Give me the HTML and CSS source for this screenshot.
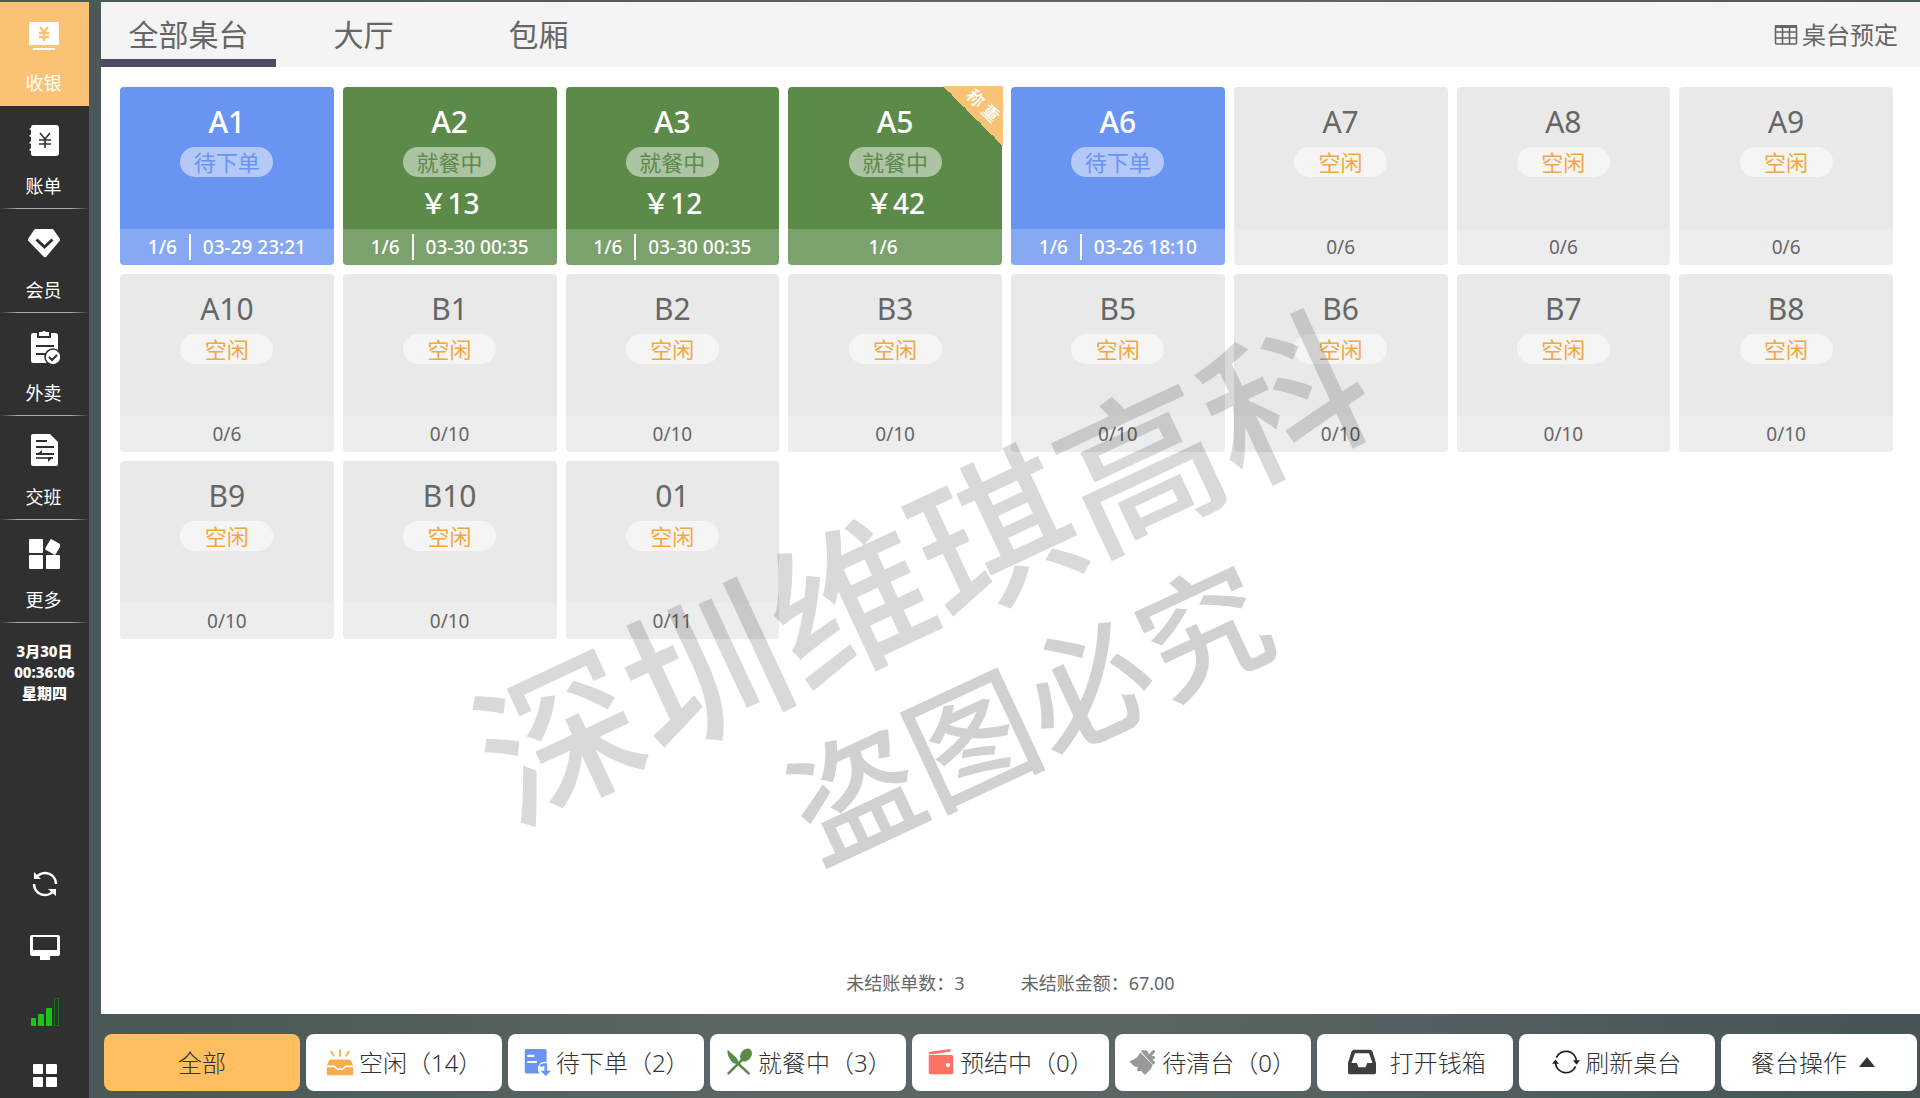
FILE: index.html
```html
<!DOCTYPE html>
<html lang="zh-CN">
<head>
<meta charset="utf-8">
<title>桌台</title>
<link rel="stylesheet" href="styles.css">
</head>
<body>
<div class="app">
  <aside class="sidebar">
    <nav class="nav">
      <a class="nav-item active" href="#cashier">
        <svg class="nav-icon" viewBox="0 0 32 32"><path fill="#fff" d="M2 2h28a1 1 0 0 1 1 1v21a1 1 0 0 1-1 1H2a1 1 0 0 1-1-1V3a1 1 0 0 1 1-1zM5 28h22v2H5z"/><path fill="none" stroke="#f9c275" stroke-width="2.4" d="M12 7l4 5 4-5M11 13h10M11 17h10M16 12v9"/></svg>
        <span>收银</span></a>
      <a class="nav-item" href="#bills">
        <svg class="nav-icon" viewBox="0 0 32 32"><path fill="#fff" d="M5 1h23q3 0 3 3v25q0 3-3 3H5q-2 0-2-3v-2l-2-1 2-2v-4l-2-1 2-2v-4l-2-1 2-2V6L1 5l2-1q0-3 2-3z"/><path fill="none" stroke="#303030" stroke-width="1.6" d="M12 9l5 6 5-6M11 16h12M11 20h12M17 15v9"/></svg>
        <span>账单</span></a>
      <a class="nav-item" href="#members">
        <svg class="nav-icon" viewBox="0 0 32 32"><path fill="#fff" d="M8 2h17l7 10q.5 1-.5 2L18.500 29.500q-1.500 1.500-3 0L.5 14q-1-1-.5-2L6 3q.7-1 2-1z"/><path fill="none" stroke="#303030" stroke-width="3" d="M8.500 12.500l8 7.500 8-7.500"/></svg>
        <span>会员</span></a>
      <a class="nav-item" href="#takeout">
        <svg class="nav-icon tall" viewBox="0 0 32 36"><path fill="#fff" d="M5 4h4v5h14V4h4q3 0 3 3v26q0 1-1 1H5q-2 0-2-2V6q0-2 2-2zM11 3h3a2.500 2.500 0 0 1 4 0h3v4H11z"/><path fill="none" stroke="#303030" stroke-width="2.200" d="M8 17h18M8 25h9"/><circle cx="25" cy="28" r="8" fill="#fff" stroke="#303030" stroke-width="1.600"/><path fill="none" stroke="#303030" stroke-width="2" d="M21 28l3 3 5-5"/></svg>
        <span>外卖</span></a>
      <a class="nav-item" href="#shift">
        <svg class="nav-icon tall" viewBox="0 0 32 36"><path fill="#fff" d="M5 2h17l8 8v22q0 2-2 2H5q-2 0-2-2V4q0-2 2-2z"/><path fill="none" stroke="#303030" stroke-width="2" d="M8 9h11M8 15h18M8 22h18"/><path fill="none" stroke="#303030" stroke-width="1.600" d="M8 26h17"/><path fill="#303030" d="M8 23l6-5v5zM25 25l-5 5v-5z"/></svg>
        <span>交班</span></a>
      <a class="nav-item" href="#more">
        <svg class="nav-icon" viewBox="0 0 32 32"><g fill="#fff"><rect x="1" y="1" width="14" height="14" rx="1"/><rect x="1" y="17" width="14" height="14" rx="1"/><rect x="18" y="17" width="14" height="14" rx="1"/><rect x="19" y="3" width="12" height="12" rx="1" transform="rotate(30 25 9)"/></g></svg>
        <span>更多</span></a>
    </nav>
    <div class="clock"><span>3月30日</span><span>00:36:06</span><span>星期四</span></div>
    <div class="tools">
      <button class="tool" aria-label="刷新"><svg viewBox="0 0 32 32"><g fill="none" stroke="#fff" stroke-width="2.600"><path d="M7.500 9A11 11 0 0 1 27 16M24.500 23A11 11 0 0 1 5 16"/></g><path fill="#fff" d="M5 4v7h7zM27 28v-7h-8z"/></svg></button>
      <button class="tool" aria-label="副屏"><svg viewBox="0 0 32 32"><path fill="#fff" fill-rule="evenodd" d="M3 3h26q2 0 2 2v17q0 2-2 2h-8v4H11v-4H3q-2 0-2-2V5q0-2 2-2zM4 5v13h24V5z"/></svg></button>
      <button class="tool" aria-label="信号"><svg viewBox="0 0 32 32"><g fill="#1bc41b"><rect x="2" y="22" width="5" height="8" rx="1"/><rect x="9" y="18" width="6" height="12" rx="1"/><rect x="17" y="12" width="6" height="18" rx="1"/></g><rect x="25.500" y="2.500" width="4" height="27" fill="none" stroke="#1a741f"/></svg></button>
      <button class="tool" aria-label="应用"><svg viewBox="0 0 32 32"><g fill="#fff"><rect x="4" y="4" width="10" height="10" rx="1"/><rect x="17" y="4" width="11" height="10" rx="1"/><rect x="4" y="17" width="10" height="10" rx="1"/><rect x="17" y="17" width="11" height="10" rx="1"/></g></svg></button>
    </div>
  </aside>

  <div class="content">
    <main class="panel">
      <header class="topbar">
        <button class="tab active">全部桌台</button>
        <button class="tab">大厅</button>
        <button class="tab">包厢</button>
        <a class="reserve" href="#reserve"><svg class="grid-icon" viewBox="0 0 24 24"><g fill="none" stroke="#666" stroke-width="1.600"><rect x="1.500" y="3" width="21" height="18" rx="1"/><path d="M1 9h22M1 15h22M8.500 4v17M15.500 4v17"/></g><path fill="#666" d="M1 2h22v3H1z"/></svg>桌台预定</a>
      </header>

      <section class="tables">
        <button class="card waiting"><span class="name">A1</span><span class="pill">待下单</span><span class="foot"><span>1/6</span><span class="time">03-29 23:21</span></span></button>
        <button class="card dining"><span class="name">A2</span><span class="pill">就餐中</span><span class="price">￥13</span><span class="foot"><span>1/6</span><span class="time">03-30 00:35</span></span></button>
        <button class="card dining"><span class="name">A3</span><span class="pill">就餐中</span><span class="price">￥12</span><span class="foot"><span>1/6</span><span class="time">03-30 00:35</span></span></button>
        <button class="card dining"><span class="name">A5</span><span class="pill">就餐中</span><span class="price">￥42</span><span class="foot untimed"><span>1/6</span></span><span class="ribbon"><span class="ribbon-text">称 重</span></span></button>
        <button class="card waiting"><span class="name">A6</span><span class="pill">待下单</span><span class="foot"><span>1/6</span><span class="time">03-26 18:10</span></span></button>
        <button class="card"><span class="name">A7</span><span class="pill">空闲</span><span class="foot">0/6</span></button>
        <button class="card"><span class="name">A8</span><span class="pill">空闲</span><span class="foot">0/6</span></button>
        <button class="card"><span class="name">A9</span><span class="pill">空闲</span><span class="foot">0/6</span></button>
        <button class="card"><span class="name">A10</span><span class="pill">空闲</span><span class="foot">0/6</span></button>
        <button class="card"><span class="name">B1</span><span class="pill">空闲</span><span class="foot">0/10</span></button>
        <button class="card"><span class="name">B2</span><span class="pill">空闲</span><span class="foot">0/10</span></button>
        <button class="card"><span class="name">B3</span><span class="pill">空闲</span><span class="foot">0/10</span></button>
        <button class="card"><span class="name">B5</span><span class="pill">空闲</span><span class="foot">0/10</span></button>
        <button class="card"><span class="name">B6</span><span class="pill">空闲</span><span class="foot">0/10</span></button>
        <button class="card"><span class="name">B7</span><span class="pill">空闲</span><span class="foot">0/10</span></button>
        <button class="card"><span class="name">B8</span><span class="pill">空闲</span><span class="foot">0/10</span></button>
        <button class="card"><span class="name">B9</span><span class="pill">空闲</span><span class="foot">0/10</span></button>
        <button class="card"><span class="name">B10</span><span class="pill">空闲</span><span class="foot">0/10</span></button>
        <button class="card"><span class="name">01</span><span class="pill">空闲</span><span class="foot">0/11</span></button>
      </section>

      <div class="summary"><span>未结账单数：3</span><span>未结账金额：67.00</span></div>

      <div class="watermark"><span class="mark-main">深圳维琪高科</span><span class="mark-sub">盗图必究</span></div>
    </main>

    <footer class="actions">
      <button class="action selected">全部</button>
      <button class="action"><svg viewBox="0 0 32 32"><g fill="#f5ad4e"><path d="M6 13h20q2 0 3 2l2 5h-9l-3 3h-6l-3-3H1l2-5q1-2 3-2z"/><path d="M1 22h8l4 3h6l4-3h8v8q0 1-1 1H2q-1 0-1-1z"/></g><path fill="none" stroke="#f5ad4e" stroke-width="2" stroke-linecap="round" d="M6 4l3 5M16 2v7M26 4l-3 5"/></svg>空闲（14）</button>
      <button class="action"><svg viewBox="0 0 32 32"><path fill="#6a94f2" d="M3 1h22q2 0 2 2v13a8 8 0 0 0-8 13H4q-2 0-2-2V3q0-1 1-2z"/><path stroke="#fff" stroke-width="2.500" d="M5 9h8M5 16h11"/><path fill="none" stroke="#6a94f2" stroke-width="3" d="M20 21q1-2 6-2v8"/><path fill="#6a94f2" d="M20 26h12l-6 6z"/></svg>待下单（2）</button>
      <button class="action"><svg viewBox="0 0 32 32"><g fill="#5b8a49"><path d="M3 2l10 9q3 3 1 6l-2 1q-3 0-6-5-4-5-3-11z"/><ellipse cx="24" cy="8" rx="6" ry="8" transform="rotate(38 24 8)"/></g><path stroke="#5b8a49" stroke-width="3" stroke-linecap="round" d="M21 12L4 29M13 16l14 13"/></svg>就餐中（3）</button>
      <button class="action"><svg viewBox="0 0 32 32"><path fill="#fd7262" fill-rule="evenodd" d="M2 8h26q2 0 2 2v18q0 2-2 2H4q-2 0-2-2zM24 17a2.500 2.500 0 1 0 .1 0zM2 6q0-2 3-2l22-3v3L7 7H2z"/></svg>预结中（0）</button>
      <button class="action"><svg viewBox="0 0 32 32"><path fill="#999" d="M13 5l14 14-2 5-6 6q-1 1-2 0l-3-4q-3 1-5 0l1-4q-3 0-5-2l-4-4q-1-1 0-1l8-4z"/><path stroke="#999" stroke-width="3.500" stroke-linecap="round" d="M16 4l12 13M23 10l5-6M19 4l2 3M25 11l3 0"/></svg>待清台（0）</button>
      <button class="action wide"><svg viewBox="0 0 32 32"><path fill="#3e3e3e" fill-rule="evenodd" d="M7 2h18q2 0 3 2l4 13v11q0 2-2 2H2q-2 0-2-2V17L4 4q1-2 3-2zM8 6L4 17h6l2 5h8l2-5h6L24 6z"/></svg>打开钱箱</button>
      <button class="action"><svg viewBox="0 0 32 32"><path fill="none" stroke="#222" stroke-width="2" d="M5 11A12 12 0 0 1 28 15M27 21A12 12 0 0 1 4 17"/><path fill="#222" d="M24 14h8l-4 5zM0 18h8l-4-5z"/></svg>刷新桌台</button>
      <button class="action ops">餐台操作<svg class="caret" viewBox="0 0 16 12"><path fill="#333" d="M8 1l8 10H0z"/></svg></button>
    </footer>
  </div>
</div>
</body>
</html>
```
FILE: styles.css
```css
* { box-sizing: border-box; }

body {
  margin: 0;
  font-family: "Noto Sans", "Noto Sans CJK SC", sans-serif;
  color: #666;
  background: linear-gradient(100deg, #4a5858 0%, #4a5858 15%, #5c6666 45%, #5c6666 60%, #465456 100%);
}

button {
  margin: 0;
  padding: 0;
  border: 0;
  background: none;
  font: inherit;
  color: inherit;
  cursor: pointer;
}

a { color: inherit; text-decoration: none; }

.app {
  display: flex;
  gap: 12px;
  min-height: 100vh;
  padding-top: 2px;
}

/* sidebar */
.sidebar {
  display: flex;
  flex-direction: column;
  flex: 0 0 89px;
  background: #303030;
  color: #fff;
}

.nav {
  display: grid;
  grid-template-rows: repeat(6, 1fr);
  height: 621px;
}

.nav-item {
  display: flex;
  flex-direction: column;
  align-items: center;
  justify-content: space-between;
  padding: 18px 2px 11px 0;
  font-size: 18px;
  line-height: 24px;
  background: linear-gradient(90deg, transparent, #aaa 20%, #aaa 80%, transparent) bottom / 100% 1px no-repeat;
}

.nav-item.active { background: #f9c275; }

.nav-icon { width: 32px; height: 32px; }
.nav-icon.tall { height: 36px; margin-top: -2px; }

.clock {
  display: flex;
  flex-direction: column;
  align-items: center;
  margin-top: 18px;
  font-size: 15px;
  font-weight: 800;
  line-height: 21px;
}

.tools {
  display: flex;
  flex-direction: column;
  align-items: center;
  gap: 32px;
  margin-top: auto;
  padding-bottom: 6px;
}

.tool { width: 32px; height: 32px; }
.tool svg { display: block; width: 32px; height: 32px; }

/* content */
.content {
  display: flex;
  flex-direction: column;
  flex: 1;
  min-width: 0;
}

.panel {
  position: relative;
  display: flex;
  flex-direction: column;
  flex: 1;
  background: #fff;
}

.topbar {
  display: flex;
  height: 65px;
  background: #f4f4f4;
}

.tab {
  width: 175px;
  border-bottom: 8px solid transparent;
  padding-top: 8px;
  font-size: 30px;
  line-height: 40px;
}

.tab.active { border-color: #4f4b66; }

.reserve {
  display: flex;
  align-items: center;
  gap: 4px;
  margin-left: auto;
  padding-right: 22px;
  font-size: 24px;
  line-height: 32px;
}

.grid-icon { width: 24px; height: 24px; }

.tables {
  display: grid;
  grid-template-columns: repeat(8, 1fr);
  gap: 9px;
  padding: 20px 27px 0 19px;
}

.card {
  position: relative;
  display: flex;
  flex-direction: column;
  align-items: center;
  height: 178px;
  padding-top: 15px;
  border-radius: 4px;
  background: #e9e9e9;
}

.name { font-size: 30px; line-height: 40px; }

.pill {
  width: 93px;
  margin-top: 5px;
  border-radius: 15px;
  font-size: 22px;
  line-height: 30px;
  color: #f5a73d;
  background: #f5f5f5;
}

.price { margin-top: 6px; font-size: 28px; line-height: 40px; font-weight: 500; }

.foot {
  display: flex;
  align-items: center;
  justify-content: center;
  align-self: stretch;
  height: 36px;
  margin-top: auto;
  border-radius: 0 0 4px 4px;
  font-size: 19px;
  background: rgba(255, 255, 255, 0.2);
}

.time {
  margin-left: 12px;
  padding-left: 12px;
  border-left: 2px solid #fff;
}

.untimed { padding-right: 24px; }

.waiting, .dining { color: #fff; }
.waiting .name, .dining .name, .waiting .foot, .dining .foot { font-weight: 500; }
.waiting { background: #6a94f2; }
.dining { background: #5b8a49; }
.waiting .pill { color: #6a94f2; background: #b4c9f8; }
.dining .pill { color: #5b8a49; background: #adc4a4; }

.ribbon {
  position: absolute;
  top: -1px;
  right: -1px;
  width: 60px;
  height: 60px;
  background: linear-gradient(45deg, transparent 50%, #f9c275 50%);
}

.ribbon-text {
  position: absolute;
  top: 8px;
  left: 10px;
  width: 60px;
  font-size: 17px;
  font-weight: 500;
  line-height: 24px;
  transform: rotate(45deg);
}

.summary {
  display: flex;
  justify-content: center;
  gap: 56px;
  margin-top: auto;
  padding-bottom: 18px;
  font-size: 18px;
  line-height: 26px;
}

.watermark {
  position: absolute;
  top: 63%;
  left: 47%;
  display: flex;
  flex-direction: column;
  align-items: center;
  font-weight: 500;
  white-space: nowrap;
  color: rgba(0, 0, 0, 0.15);
  transform: translate(-50%, -50%) rotate(-25deg);
  pointer-events: none;
}

.mark-main { font-size: 160px; line-height: 192px; }
.mark-sub { padding-left: 72px; font-size: 128px; line-height: 162px; color: rgba(0, 0, 0, 0.18); }

/* bottom actions */
.actions {
  display: grid;
  grid-template-columns: repeat(9, 1fr);
  gap: 6px;
  padding: 20px 3px 7px;
}

.action {
  display: flex;
  align-items: center;
  justify-content: center;
  gap: 5px;
  height: 57px;
  padding-bottom: 2px;
  border-radius: 8px;
  font-size: 24px;
  font-weight: 300;
  white-space: nowrap;
  color: #333;
  background: #fff;
}

.action svg { flex: none; width: 28px; height: 28px; }
.action .caret { width: 16px; height: 12px; }
.action.selected { background: #ffbe5f; }
.action.wide { gap: 14px; padding-left: 4px; }
.action.ops { gap: 12px; padding-right: 12px; }
```
